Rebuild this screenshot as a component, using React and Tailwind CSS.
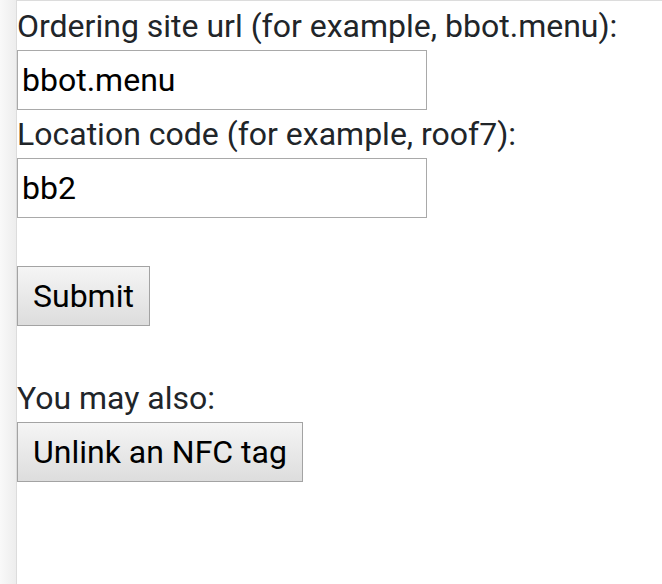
import React from 'react';

const Field = ({ label, value }) => (
  <>
    <div className="leading-[48px] text-[#212529]">{label}</div>
    <input
      defaultValue={value}
      className="block h-[60px] w-[410px] border border-[#a9a9a9] bg-white px-1 text-[32px] text-black outline-none"
      style={{ fontFamily: 'Roboto, sans-serif' }}
    />
  </>
);

const Button = ({ children }) => (
  <button className="block h-[60px] border border-[#a3a3a3] bg-gradient-to-b from-[#f5f5f5] to-[#dddddd] px-[15px] text-[32px] leading-none text-black">
    {children}
  </button>
);

export default function App() {
  return (
    <div className="flex min-h-[584px] bg-white font-['Roboto',sans-serif] text-[32px]">
      {/* gutter on the left */}
      <div className="w-4 shrink-0 bg-gradient-to-r from-[#f9f9f9] to-[#ededed]" />
      <div className="flex-1 border-l border-t border-[#dcdcdc] pt-px">
        <Field label="Ordering site url (for example, bbot.menu):" value="bbot.menu" />
        <Field label="Location code (for example, roof7):" value="bb2" />
        <div className="h-12" />
        <Button>Submit</Button>
        <div className="h-12" />
        <div className="leading-[48px] text-[#212529]">You may also:</div>
        <Button>Unlink an NFC tag</Button>
      </div>
    </div>
  );
}
